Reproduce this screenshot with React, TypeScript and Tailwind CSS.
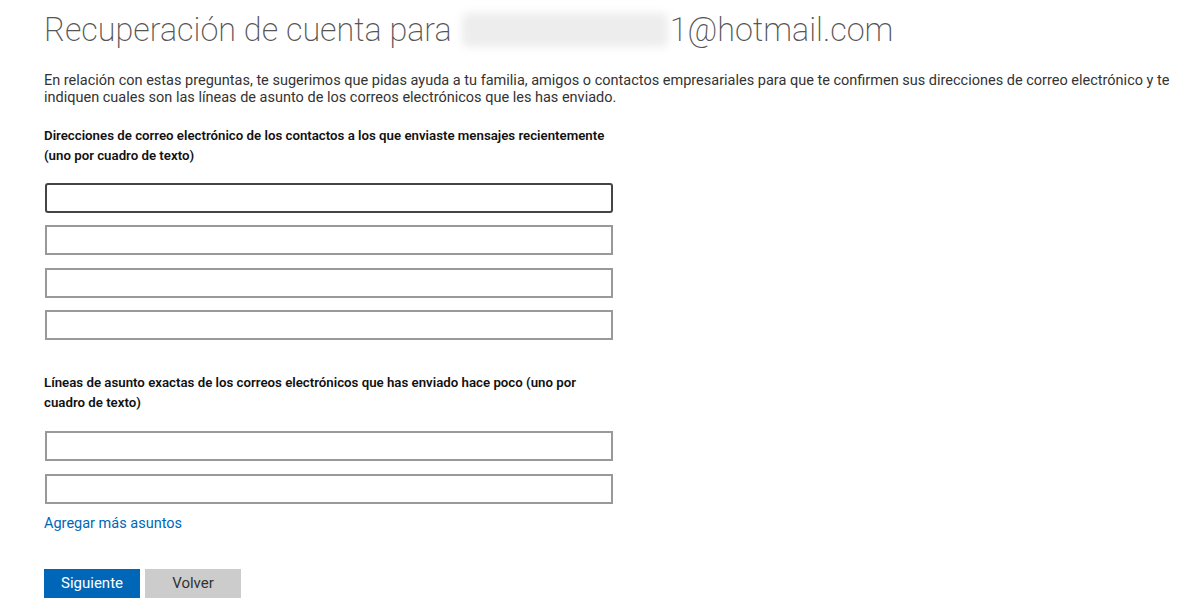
import React from "react";

const Field = ({ focused }: { focused?: boolean }) => (
  <input
    type="text"
    className={
      focused
        ? "block w-[568px] h-[30px] border-2 border-[#444] rounded-[3px] bg-white outline-none"
        : "block w-[568px] h-[30px] border-2 border-[#999] bg-white outline-none"
    }
  />
);

export default function App() {
  return (
    <div className="bg-white min-h-[608px] pl-[44px] pt-[10px] text-[#222] font-['Roboto',_'Liberation_Sans',_sans-serif]">
      {/* título */}
      <h1 className="flex items-center text-[32.3px] font-extralight leading-[40px] text-[#555]">
        <span>Recuperación de cuenta para</span>
        <span className="inline-block w-[206px] h-[34px] ml-[10px] mr-[2px] bg-[#ededed] blur-[4px] rounded-md" />
        <span>1@hotmail.com</span>
      </h1>

      <p className="mt-[22px] w-[1150px] text-[14.5px] leading-[17px] text-[#333]">
        En relación con estas preguntas, te sugerimos que pidas ayuda a tu familia, amigos o contactos empresariales para que te confirmen sus direcciones de correo electrónico y te indiquen cuales son las líneas de asunto de los correos electrónicos que les has enviado.
      </p>

      {/* contactos */}
      <div className="mt-[20px] w-[570px] text-[13.25px] font-semibold leading-[20px] text-[#111]">
        Direcciones de correo electrónico de los contactos a los que enviaste mensajes recientemente (uno por cuadro de texto)
      </div>
      <div className="mt-[17px] ml-[1px] flex flex-col gap-[12.4px]">
        <Field focused />
        <Field />
        <Field />
        <Field />
      </div>

      {/* asuntos */}
      <div className="mt-[33px] w-[570px] text-[13.25px] font-semibold leading-[20px] text-[#111]">
        Líneas de asunto exactas de los correos electrónicos que has enviado hace poco (uno por cuadro de texto)
      </div>
      <div className="mt-[18px] ml-[1px] flex flex-col gap-[12.4px]">
        <Field />
        <Field />
      </div>

      <a href="#" className="block mt-[11px] text-[14.5px] leading-[18px] text-[#0067b8]">
        Agregar más asuntos
      </a>

      <div className="mt-[36px] flex gap-[5px]">
        <button className="w-[96px] h-[29px] bg-[#0067b8] text-white text-[15px]">Siguiente</button>
        <button className="w-[96px] h-[29px] bg-[#cccccc] text-[#333] text-[15px]">Volver</button>
      </div>
    </div>
  );
}
